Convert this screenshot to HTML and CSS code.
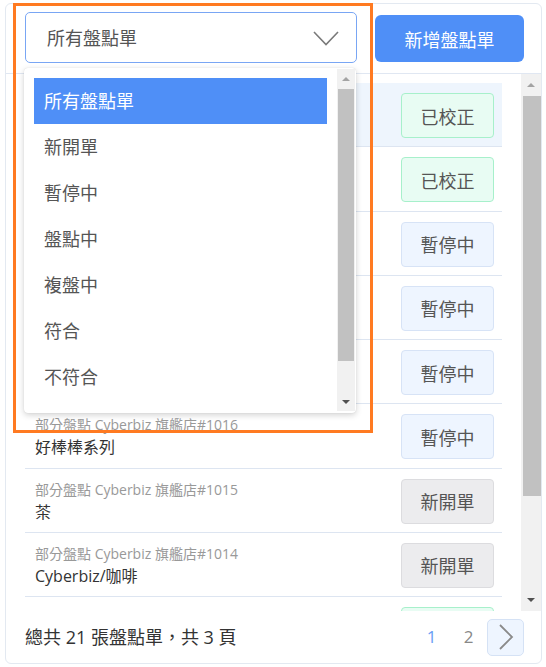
FILE: index.html
```html
<!DOCTYPE html>
<html lang="zh-Hant">
<head>
<meta charset="utf-8">
<title>盤點單</title>
<link rel="stylesheet" href="styles.css">
</head>
<body>
<div class="card">
  <div class="header">
    <div class="select-wrap">
      <div class="select">
        <span class="select-text">所有盤點單</span>
        <svg class="chev" width="26" height="15" viewBox="0 0 26 15"><polyline points="1,1 13,13.5 25,1" fill="none" stroke="#7a7a7a" stroke-width="1.6"/></svg>
      </div>
      <div class="dropdown">
        <ul class="options">
          <li class="opt active">所有盤點單</li>
          <li class="opt">新開單</li>
          <li class="opt">暫停中</li>
          <li class="opt">盤點中</li>
          <li class="opt">複盤中</li>
          <li class="opt">符合</li>
          <li class="opt">不符合</li>
        </ul>
        <div class="sbar sbar-sm">
          <div class="sbtn sbtn-sm"><span class="arr up light"></span></div>
          <div class="strack"><div class="sthumb thumb-sm"></div></div>
          <div class="sbtn sbtn-sm"><span class="arr down"></span></div>
        </div>
      </div>
    </div>
    <button class="btn-primary">新增盤點單</button>
  </div>

  <div class="body">
    <div class="list">
      <div class="row sel">
        <div class="info"><div class="sub">部分盤點 Cyberbiz 旗艦店#1021</div><div class="name">春季新品</div></div>
        <div class="badge green">已校正</div>
      </div>
      <div class="row">
        <div class="info"><div class="sub">部分盤點 Cyberbiz 旗艦店#1020</div><div class="name">飲品系列</div></div>
        <div class="badge green">已校正</div>
      </div>
      <div class="row">
        <div class="info"><div class="sub">部分盤點 Cyberbiz 旗艦店#1019</div><div class="name">零食</div></div>
        <div class="badge blue">暫停中</div>
      </div>
      <div class="row">
        <div class="info"><div class="sub">部分盤點 Cyberbiz 旗艦店#1018</div><div class="name">文具</div></div>
        <div class="badge blue">暫停中</div>
      </div>
      <div class="row">
        <div class="info"><div class="sub">部分盤點 Cyberbiz 旗艦店#1017</div><div class="name">餅乾</div></div>
        <div class="badge blue">暫停中</div>
      </div>
      <div class="row">
        <div class="info"><div class="sub">部分盤點 Cyberbiz 旗艦店#1016</div><div class="name">好棒棒系列</div></div>
        <div class="badge blue">暫停中</div>
      </div>
      <div class="row">
        <div class="info"><div class="sub">部分盤點 Cyberbiz 旗艦店#1015</div><div class="name">茶</div></div>
        <div class="badge gray">新開單</div>
      </div>
      <div class="row">
        <div class="info"><div class="sub">部分盤點 Cyberbiz 旗艦店#1014</div><div class="name">Cyberbiz/咖啡</div></div>
        <div class="badge gray">新開單</div>
      </div>
      <div class="row">
        <div class="info"><div class="sub">部分盤點 Cyberbiz 旗艦店#1013</div><div class="name">果汁</div></div>
        <div class="badge green">已校正</div>
      </div>
    </div>
    <div class="sbar sbar-lg">
      <div class="sbtn sbtn-lg"><span class="arr up light"></span></div>
      <div class="strack"><div class="sthumb thumb-lg"></div></div>
      <div class="sbtn sbtn-lg"><span class="arr down"></span></div>
    </div>
  </div>

  <div class="footer">
    <div class="total">總共 21 張盤點單，共 3 頁</div>
    <div class="pager">
      <span class="page current">1</span>
      <span class="page">2</span>
      <span class="next"><svg width="16" height="26" viewBox="0 0 16 26"><polyline points="2,1 14,13 2,25" fill="none" stroke="#8a8a8a" stroke-width="1.8"/></svg></span>
    </div>
  </div>
</div>
<div class="annotation"></div>
</body>
</html>
```

FILE: styles.css
```css
* { box-sizing: border-box; }
html, body { margin: 0; padding: 0; background: #fff; }
body {
  padding: 3px 4px 3px 5px;
  font-family: "Open Sans", "Noto Sans CJK TC", sans-serif;
  color: #333;
}
.card {
  width: 537px;
  height: 661px;
  border: 1px solid #e3e9f1;
  border-radius: 6px;
  display: flex;
  flex-direction: column;
  overflow: hidden;
}
.header {
  height: 70px;
  flex: none;
  display: flex;
  align-items: flex-start;
  gap: 18px;
  padding: 8px 17px 0 19px;
  border-bottom: 1px solid #e0e7f2;
}
.select-wrap { position: relative; width: 332px; }
.select {
  height: 51px;
  border: 1px solid #79a6f4;
  border-radius: 5px;
  display: flex;
  align-items: center;
  justify-content: space-between;
  padding: 0 17px 0 21px;
  background: #fff;
}
.select-text { font-size: 18px; color: #555; line-height: 24px; }
.chev { display: block; margin-top: 1px; }
.btn-primary {
  margin-top: 3px;
  width: 149px;
  height: 47px;
  border: none;
  border-radius: 6px;
  background: #4f8ff7;
  color: #fff;
  font-family: inherit;
  font-size: 18px;
  padding: 0;
}
.dropdown {
  position: absolute;
  left: -1px;
  top: 56px;
  width: 332px;
  height: 345px;
  background: #fff;
  border-radius: 4px;
  box-shadow: 0 2px 6px rgba(0,0,0,0.18), 0 0 1px rgba(0,0,0,0.15);
  display: flex;
  z-index: 5;
}
.options {
  list-style: none;
  margin: 0;
  flex: 1;
  padding: 10px 10px 0 10px;
}
.opt {
  height: 46px;
  line-height: 46px;
  padding-left: 10px;
  font-size: 18px;
  color: #555;
}
.opt.active { background: #4f8ff7; color: #fff; }

.sbar {
  flex: none;
  display: flex;
  flex-direction: column;
  background: #f1f1f1;
}
.sbar-sm { width: 18px; margin: 1px 1px 2px 0; }
.sbar-lg { width: 20px; }
.sbtn { display: flex; align-items: center; justify-content: center; flex: none; }
.sbtn-sm { height: 19px; }
.sbtn-lg { height: 22px; }
.strack { flex: 1; position: relative; }
.sthumb { background: #c1c1c1; }
.thumb-sm { height: 272px; margin: 1px 1px 0 1px; }
.thumb-lg { height: 400px; margin: 0 0 0 2px; }
.arr { width: 0; height: 0; border-left: 4px solid transparent; border-right: 4px solid transparent; }
.arr.up { border-bottom: 4px solid #505050; }
.arr.down { border-top: 4px solid #505050; }
.arr.up.light { border-bottom-color: #a3a3a3; }

.body {
  height: 537px;
  flex: none;
  display: flex;
}
.list {
  flex: 1;
  overflow: hidden;
  padding: 9px 19px 0 19px;
}
.row {
  height: 64.25px;
  border-bottom: 1px solid #dde5f1;
  display: flex;
  justify-content: space-between;
  align-items: flex-start;
  padding: 0 8px 0 10px;
}
.row.sel { background: #eef5fd; }
.info { padding-top: 11px; }
.sub { font-size: 14px; line-height: 20px; color: #999; }
.name { font-size: 16px; line-height: 24px; color: #333; }
.badge {
  margin-top: 10px;
  width: 93px;
  height: 45px;
  border-radius: 4px;
  border: 1px solid;
  display: flex;
  align-items: center;
  justify-content: center;
  font-size: 18px;
  color: #555;
}
.badge.green { background: #e8fcf3; border-color: #a7f0cb; }
.badge.blue { background: #eef5ff; border-color: #d7e3f6; }
.badge.gray { background: #ececee; border-color: #dcdcdf; }

.footer {
  flex: 1;
  display: flex;
  align-items: center;
  justify-content: space-between;
  padding: 0 17px 0 19px;
}
.total { font-size: 18px; color: #333; line-height: 24px; }
.pager { display: flex; align-items: center; }
.page {
  width: 37px;
  text-align: center;
  font-size: 17px;
  line-height: 24px;
  color: #888;
}
.page.current { color: #6a9ef5; }
.next {
  width: 37px;
  height: 37px;
  border: 1px solid #d5e2f5;
  border-radius: 5px;
  background: #eef5ff;
  display: flex;
  align-items: center;
  justify-content: center;
}
.next svg { display: block; }
.annotation {
  position: absolute;
  left: 13px;
  top: 3px;
  width: 360px;
  height: 430px;
  border: 3px solid #ff7a21;
  z-index: 10;
  pointer-events: none;
}
```
